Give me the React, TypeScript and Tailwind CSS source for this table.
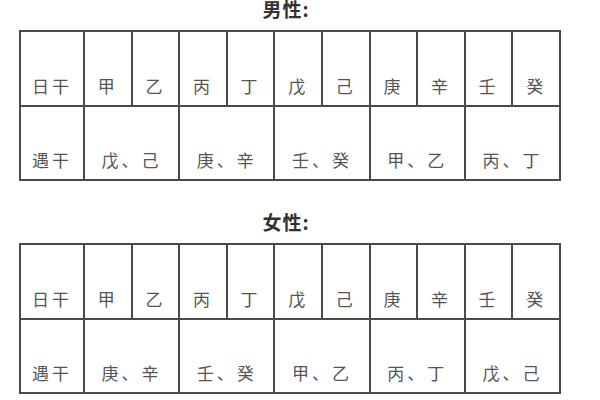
const STEMS = ['甲', '乙', '丙', '丁', '戊', '己', '庚', '辛', '壬', '癸'];

const TABLES = [
  { title: '男性:', meet: ['戊、己', '庚、辛', '壬、癸', '甲、乙', '丙、丁'] },
  { title: '女性:', meet: ['庚、辛', '壬、癸', '甲、乙', '丙、丁', '戊、己'] },
];

function Cell({ children, span }: { children: React.ReactNode; span?: boolean }) {
  return (
    <div
      className={`flex items-end justify-center bg-white pb-[11px] text-[17px] leading-none tracking-[3px] text-[#555] ${
        span ? 'col-span-2' : ''
      }`}
    >
      {children}
    </div>
  );
}

function GanTable({ title, meet }: { title: string; meet: string[] }) {
  return (
    <div className="ml-[19px] w-[542px]">
      <div className="mb-[12px] pr-[8px] text-center text-[19px] font-bold leading-[18px] tracking-[1px] text-[#333]">
        {title}
      </div>
      <div className="grid grid-cols-[62px_repeat(10,minmax(0,1fr))] grid-rows-[73px_72px] gap-[2px] bg-[#4a4a4a] p-[2px]">
        <Cell>日干</Cell>
        {STEMS.map((s) => (
          <Cell key={s}>{s}</Cell>
        ))}
        <Cell>遇干</Cell>
        {meet.map((m) => (
          <Cell key={m} span>
            {m}
          </Cell>
        ))}
      </div>
    </div>
  );
}

export default function App() {
  return (
    <div
      className="h-[400px] w-[600px] overflow-hidden bg-white"
      style={{ fontFamily: '"Noto Sans CJK SC", "Noto Sans", sans-serif' }}
    >
      <GanTable {...TABLES[0]} />
      <div className="h-[32px]" />
      <GanTable {...TABLES[1]} />
    </div>
  );
}
